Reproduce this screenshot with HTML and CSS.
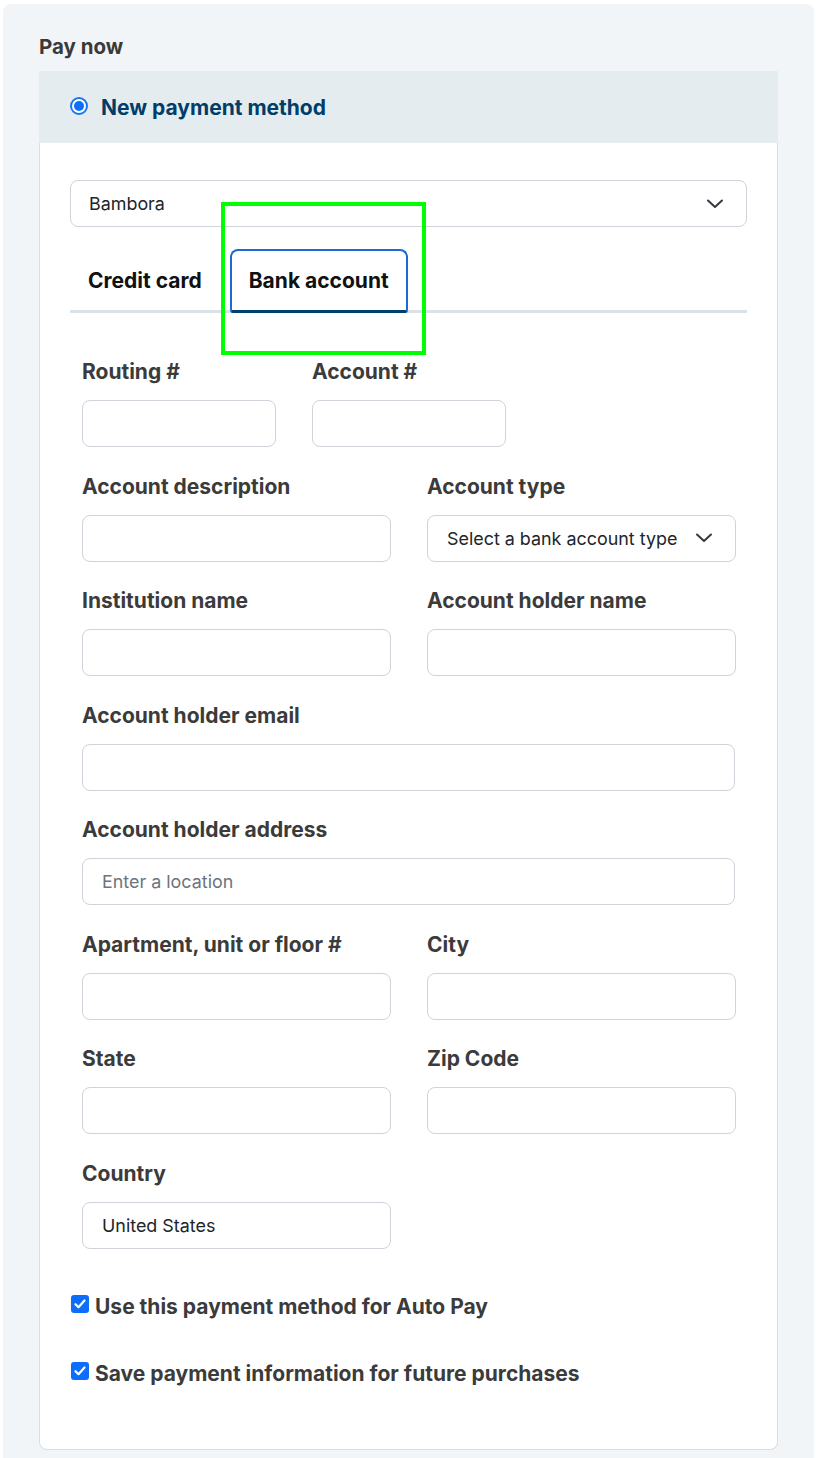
FILE: index.html
```html
<!DOCTYPE html>
<html lang="en">
<head>
<meta charset="utf-8">
<title>Pay now</title>
<link rel="stylesheet" href="styles.css">
</head>
<body>
<div class="panel">
  <h2 class="panel-title">Pay now</h2>
  <div class="card">
    <div class="card-head">
      <span class="radio"><span class="radio-dot"></span></span>
      <span class="head-label">New payment method</span>
    </div>
    <div class="card-body">
      <div class="select wide">
        <span>Bambora</span>
        <svg class="chev" width="18" height="10" viewBox="0 0 18 10"><path d="M2 1.5 L9 8 L16 1.5" fill="none" stroke="#343a40" stroke-width="2" stroke-linecap="round" stroke-linejoin="round"/></svg>
      </div>
      <div class="tabs">
        <div class="tab">Credit card</div>
        <div class="tab active">Bank account</div>
      </div>
      <div class="form">
        <div class="row row-small">
          <div class="field"><div class="label">Routing #</div><div class="input"></div></div>
          <div class="field"><div class="label">Account #</div><div class="input"></div></div>
        </div>
        <div class="row">
          <div class="field"><div class="label">Account description</div><div class="input"></div></div>
          <div class="field"><div class="label">Account type</div>
            <div class="input select-in"><span>Select a bank account type</span>
              <svg class="chev2" width="18" height="10" viewBox="0 0 18 10"><path d="M2 1.5 L9 8 L16 1.5" fill="none" stroke="#343a40" stroke-width="2" stroke-linecap="round" stroke-linejoin="round"/></svg>
            </div>
          </div>
        </div>
        <div class="row">
          <div class="field"><div class="label">Institution name</div><div class="input"></div></div>
          <div class="field"><div class="label">Account holder name</div><div class="input"></div></div>
        </div>
        <div class="row full">
          <div class="field"><div class="label">Account holder email</div><div class="input"></div></div>
        </div>
        <div class="row full">
          <div class="field"><div class="label">Account holder address</div><div class="input"><span class="ph">Enter a location</span></div></div>
        </div>
        <div class="row">
          <div class="field"><div class="label">Apartment, unit or floor #</div><div class="input"></div></div>
          <div class="field"><div class="label">City</div><div class="input"></div></div>
        </div>
        <div class="row">
          <div class="field"><div class="label">State</div><div class="input"></div></div>
          <div class="field"><div class="label">Zip Code</div><div class="input"></div></div>
        </div>
        <div class="row">
          <div class="field"><div class="label">Country</div><div class="input"><span>United States</span></div></div>
        </div>
      </div>
      <div class="checks">
        <div class="check">
          <span class="box"><svg width="12" height="10" viewBox="0 0 12 10"><path d="M1.5 5.2 L4.5 8.2 L10.5 1.5" fill="none" stroke="#fff" stroke-width="2.2" stroke-linecap="round" stroke-linejoin="round"/></svg></span>
          <span class="check-label">Use this payment method for Auto Pay</span>
        </div>
        <div class="check">
          <span class="box"><svg width="12" height="10" viewBox="0 0 12 10"><path d="M1.5 5.2 L4.5 8.2 L10.5 1.5" fill="none" stroke="#fff" stroke-width="2.2" stroke-linecap="round" stroke-linejoin="round"/></svg></span>
          <span class="check-label">Save payment information for future purchases</span>
        </div>
      </div>
    </div>
  </div>
</div>
<div class="highlight"></div>
</body>
</html>
```
FILE: styles.css
```css
* { box-sizing: border-box; }
html, body { margin: 0; padding: 0; background: #ffffff; }
body {
  font-family: Inter, "Liberation Sans", Arial, sans-serif;
  color: #212529;
  position: relative;
  height: 1458px;
  overflow: hidden;
}
.panel {
  margin: 4px 2px 0 3px;
  background: #f1f5f8;
  border-radius: 8px 8px 0 0;
  padding: 32px 36px 9px 36px;
  height: 1454px;
}
.panel-title {
  margin: 0 0 13px 0;
  font-size: 20.5px;
  line-height: 22px;
  font-weight: 700;
  color: #3a3a3a;
}
.card {
  background: #ffffff;
  border: 1px solid #d9dee3;
  border-top: none;
  border-radius: 0 0 8px 8px;
  height: 1379px;
}
.card-head {
  height: 72px;
  background: #e5ecef;
  display: flex;
  align-items: center;
  padding-left: 31px;
  gap: 13px;
  margin: 0 -1px;
}
.radio {
  width: 18px;
  height: 18px;
  border-radius: 50%;
  border: 2px solid #1677f2;
  background: #fff;
  display: flex;
  align-items: center;
  justify-content: center;
  margin-top: -2px;
}
.radio-dot {
  width: 10px;
  height: 10px;
  border-radius: 50%;
  background: #0d6efd;
}
.head-label {
  font-size: 21px;
  font-weight: 700;
  color: #003d69;
}
.card-body {
  padding: 37px 30px 0 30px;
}
.select {
  height: 47px;
  border: 1px solid #ced4da;
  border-radius: 8px;
  display: flex;
  align-items: center;
  justify-content: space-between;
  padding: 0 22px 0 18px;
  font-size: 17.9px;
  color: #212529;
}
.tabs {
  margin-top: 22px;
  display: flex;
  gap: 10px;
  border-bottom: 3px solid #dbe2e7;
  height: 64px;
}
.tab {
  height: 64px;
  padding: 0 16px 1px 16px;
  display: flex;
  align-items: center;
  font-size: 21px;
  font-weight: 700;
  color: #111;
  border: 2px solid transparent;
}
.tab.active {
  padding: 0 17px 1px 17px;
  border: 2px solid #1b6bd3;
  border-bottom: 3px solid #003e6b;
  border-radius: 8px 8px 3px 3px;
}
.form {
  padding: 47px 12px 0 12px;
}
.row {
  display: grid;
  grid-template-columns: 309px 309px;
  column-gap: 36px;
  margin-bottom: 27.5px;
}
.row-small { grid-template-columns: 194px 194px; }
.row.full { grid-template-columns: 1fr; }
.label {
  font-size: 21px;
  line-height: 24px;
  font-weight: 700;
  color: #3b3b3b;
  margin-bottom: 16px;
  white-space: nowrap;
}
.input {
  height: 47px;
  border: 1px solid #ced4da;
  border-radius: 8px;
  background: #fff;
  display: flex;
  align-items: center;
  padding: 0 19px;
  font-size: 17.9px;
  color: #212529;
}
.select-in { justify-content: space-between; padding-right: 22px; }
.ph { color: #6c757d; }
.checks {
  padding: 18px 0 0 1px;
  display: flex;
  flex-direction: column;
  gap: 43px;
}
.check {
  display: flex;
  align-items: center;
  gap: 6px;
  height: 24px;
}
.box {
  width: 18px;
  height: 18px;
  background: #0d6efd;
  border-radius: 3px;
  display: flex;
  align-items: center;
  justify-content: center;
  margin-top: -4px;
}
.check-label {
  font-size: 21px;
  font-weight: 700;
  color: #3b3b3b;
}
.highlight {
  position: absolute;
  left: 221px;
  top: 202px;
  width: 205px;
  height: 153px;
  border: 4px solid #00ff00;
}
```
